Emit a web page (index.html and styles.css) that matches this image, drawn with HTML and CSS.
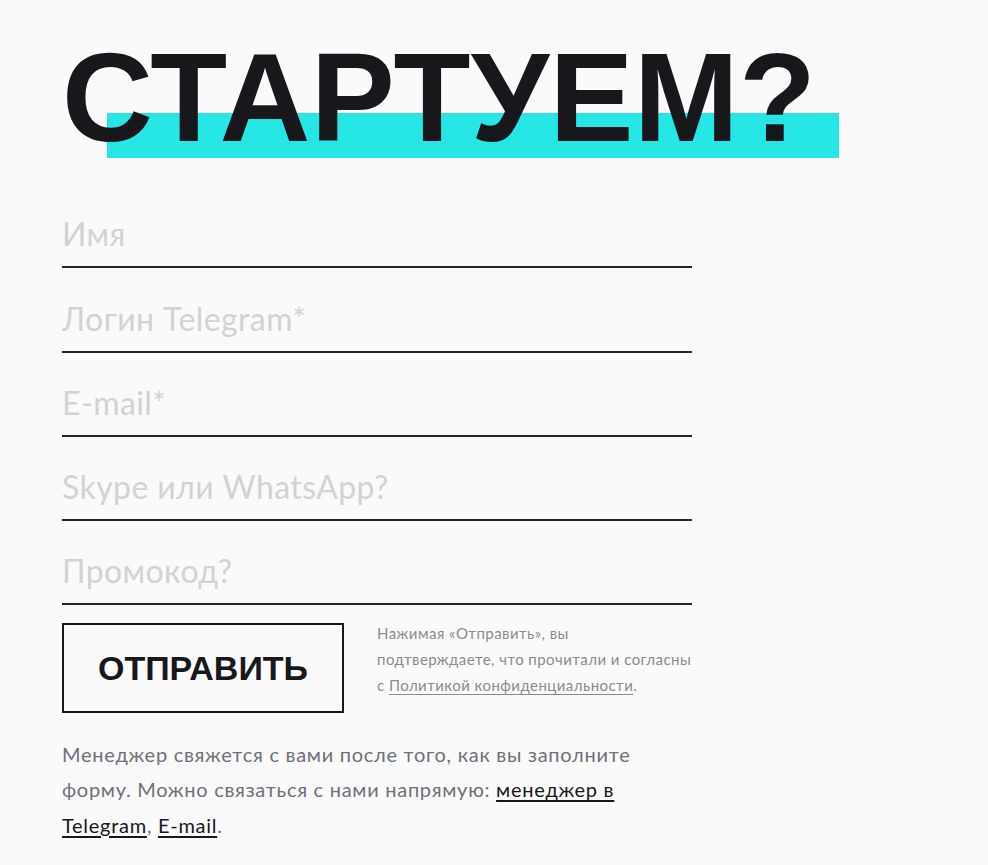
FILE: index.html
```html
<!DOCTYPE html>
<html lang="ru">
<head>
<meta charset="utf-8">
<title>Стартуем?</title>
<link rel="stylesheet" href="styles.css">
</head>
<body>
<main class="page">
  <h1 class="title">СТАРТУЕМ?</h1>
  <form class="form">
    <label class="field"><input class="input" type="text" placeholder="Имя"></label>
    <label class="field"><input class="input" type="text" placeholder="Логин Telegram*"></label>
    <label class="field"><input class="input" type="text" placeholder="E-mail*"></label>
    <label class="field"><input class="input" type="text" placeholder="Skype или WhatsApp?"></label>
    <label class="field"><input class="input" type="text" placeholder="Промокод?"></label>
    <div class="submit-row">
      <button class="submit" type="button">ОТПРАВИТЬ</button>
      <p class="consent">Нажимая «Отправить», вы<br>подтверждаете, что прочитали и согласны<br>с <a class="policy" href="#">Политикой конфиденциальности</a>.</p>
    </div>
  </form>
  <p class="note">Менеджер свяжется с вами после того, как вы заполните<br>форму. Можно связаться с нами напрямую: <a class="link" href="#">менеджер в<br>Telegram</a>, <a class="link" href="#">E-mail</a>.</p>
</main>
</body>
</html>
```

FILE: styles.css
```css
html, body {
  margin: 0;
  padding: 0;
  background: #fafafa;
}

body {
  font-family: "Lato", "Open Sans", sans-serif;
  color: #18171c;
}

.page {
  padding: 35px 0 0 62px;
  width: 630px;
}

.title {
  position: relative;
  z-index: 0;
  display: inline-block;
  margin: 0;
  font-family: "Liberation Sans", Arial, sans-serif;
  font-weight: 700;
  font-size: 126px;
  line-height: 125px;
  letter-spacing: 0.3px;
  color: #18171c;
  white-space: nowrap;
}

.title::before {
  content: "";
  position: absolute;
  z-index: -1;
  left: 45px;
  top: 78px;
  width: 732px;
  height: 45px;
  background: #26e6e6;
}

.form {
  display: flex;
  flex-direction: column;
  margin-top: 24px;
}

.field {
  display: flex;
  align-items: flex-end;
  height: 82.25px;
  border-bottom: 2px solid #232429;
}

.input {
  width: 100%;
  border: 0;
  padding: 0 0 12px 0;
  margin: 0;
  background: transparent;
  font-family: "Lato", "Open Sans", sans-serif;
  font-size: 32px;
  line-height: 40px;
  letter-spacing: 0.4px;
  color: #18171c;
  outline: none;
}

.input::placeholder {
  color: #d2d2d2;
}

.submit-row {
  display: flex;
  align-items: flex-start;
  gap: 33px;
  margin-top: 18px;
}

.submit {
  flex: 0 0 auto;
  width: 282px;
  height: 90px;
  border: 2px solid #18171c;
  background: transparent;
  font-family: "Liberation Sans", Arial, sans-serif;
  font-weight: 700;
  font-size: 34px;
  color: #18171c;
  padding: 0;
  cursor: pointer;
}

.consent {
  margin: -3px 0 0 0;
  font-size: 15px;
  line-height: 26px;
  letter-spacing: 0.45px;
  color: #8b8b8f;
  white-space: nowrap;
}

.policy {
  color: #8b8b8f;
  text-decoration: none;
  border-bottom: 1px solid #8b8b8f;
}

.note {
  margin: 23.5px 0 0 0;
  font-size: 20px;
  line-height: 35.5px;
  letter-spacing: 0.72px;
  color: #6f7079;
  white-space: nowrap;
}

.link {
  color: #18171c;
  text-decoration: underline;
  text-decoration-thickness: 2px;
  text-underline-offset: 3px;
}
```
